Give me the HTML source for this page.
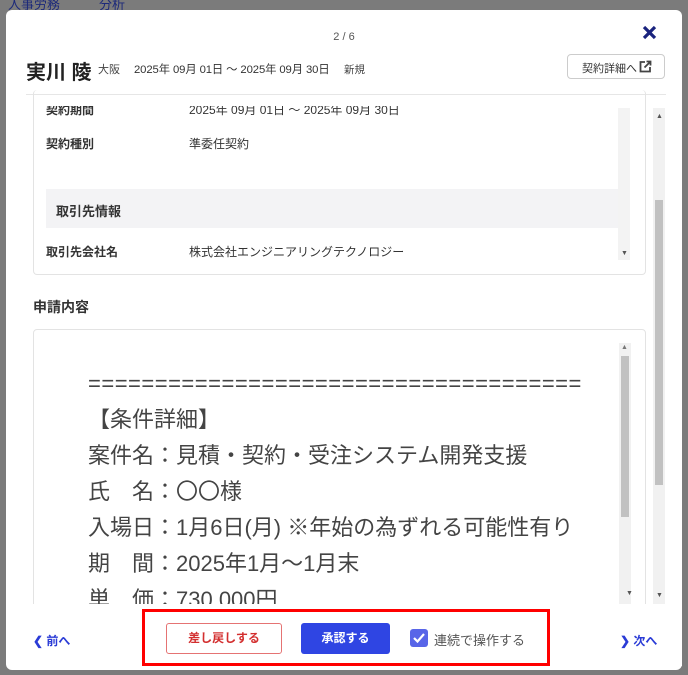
<!DOCTYPE html>
<html><head><meta charset="utf-8"><style>
*{box-sizing:border-box;margin:0;padding:0}
body{width:688px;height:675px;overflow:hidden;background:#7b7b7b;font-family:"Liberation Sans","Noto Sans CJK JP",sans-serif;color:#333;position:relative}
.abs{position:absolute}
.modal{left:6px;top:10px;width:676px;height:660px;background:#fff;border-radius:6px}
.t12{font-size:12px}
</style></head><body>
<div class="abs" style="left:8px;top:-6px;font-size:13px;color:#1d2a7a">人事労務　　　分析</div>
<div class="abs modal"></div>
<div class="abs" style="left:0;width:688px;top:31px;text-align:center;font-size:11px;color:#555">2 / 6</div>
<svg class="abs" style="left:642px;top:25px" width="15" height="15" viewBox="0 0 15 15"><path d="M2 2L13 13M13 2L2 13" stroke="#1a237e" stroke-width="3.2"/></svg>
<div class="abs" style="left:26px;top:56px;font-size:20px;font-weight:bold;color:#222">実川 陵</div>
<div class="abs" style="left:98px;top:61px;font-size:11px;color:#444">大阪</div>
<div class="abs" style="left:134px;top:61px;font-size:11.3px;color:#333;letter-spacing:-0.1px">2025年 09月 01日 ～ 2025年 09月 30日</div>
<div class="abs" style="left:344px;top:62px;font-size:10.5px;color:#444">新規</div>
<div class="abs" style="left:567px;top:54px;width:98px;height:25px;border:1px solid #ccc;border-radius:4px;font-size:11px;color:#333;padding:5px 0 0 14px">契約詳細へ
<svg style="position:absolute;left:71px;top:5px" width="13" height="13" viewBox="0 0 13 13"><path d="M6 2H1.5V11.5H11V7M7.5 1.5H11.5V5.5M11.5 1.5L5.5 7.5" stroke="#444" stroke-width="1.8" fill="none"/></svg></div>
<div class="abs" style="left:26px;top:94px;width:640px;height:1px;background:#e6e6e6"></div>
<!-- outer scrollbar -->
<div class="abs" style="left:653px;top:108px;width:12px;height:497px;background:#f1f1f1"></div>
<div class="abs" style="left:655px;top:200px;width:8px;height:285px;background:#c1c1c1"></div>
<div class="abs" style="left:656px;top:113px;font-size:7px;color:#555">▲</div>
<div class="abs" style="left:656px;top:592px;font-size:7px;color:#555">▼</div>
<!-- card1 -->
<div class="abs" style="left:33px;top:90px;width:613px;height:185px;border:1px solid #e3e3e3;border-radius:4px;border-top:none"></div>
<div class="abs" style="left:618px;top:108px;width:12px;height:152px;background:#f3f3f3"></div>
<div class="abs" style="left:621px;top:250px;font-size:7px;color:#555">▼</div>
<div class="abs t12" style="left:46px;top:101px;color:#333;font-weight:bold">契約期間</div>
<div class="abs t12" style="left:189px;top:101px">2025年 09月 01日 ～ 2025年 09月 30日</div>
<div class="abs" style="left:34px;top:96px;width:611px;height:10px;background:#fff"></div>
<div class="abs t12" style="left:46px;top:135px;font-weight:bold">契約種別</div>
<div class="abs t12" style="left:189px;top:135px">準委任契約</div>
<div class="abs" style="left:46px;top:189px;width:572px;height:39px;background:#f3f3f5"></div>
<div class="abs" style="left:56px;top:201px;font-size:13px;font-weight:bold">取引先情報</div>
<div class="abs t12" style="left:46px;top:243px;font-weight:bold">取引先会社名</div>
<div class="abs t12" style="left:189px;top:243px">株式会社エンジニアリングテクノロジー</div>
<div class="abs" style="left:33px;top:297px;font-size:14px;font-weight:bold">申請内容</div>
<!-- card2 -->
<div class="abs" style="left:33px;top:329px;width:613px;height:300px;border:1px solid #e3e3e3;border-radius:4px"></div>
<div class="abs" style="left:619px;top:343px;width:12px;height:262px;background:#f1f1f1"></div>
<div class="abs" style="left:621px;top:356px;width:8px;height:161px;background:#c1c1c1"></div>
<div class="abs" style="left:621px;top:344px;font-size:7px;color:#777">▲</div>
<div class="abs" style="left:626px;top:590px;font-size:7px;color:#555">▼</div>
<div class="abs" style="left:88px;top:366px;font-size:22px;line-height:36px;color:#444;white-space:nowrap">
<div style="letter-spacing:0.5px">=====================================</div>
<div>【条件詳細】</div>
<div>案件名：見積・契約・受注システム開発支援</div>
<div>氏　名：〇〇様</div>
<div>入場日：1月6日(月) ※年始の為ずれる可能性有り</div>
<div>期　間：2025年1月～1月末</div>
<div>単　価：730,000円</div>
</div>
<!-- footer -->
<div class="abs" style="left:26px;top:604px;width:656px;height:62px;background:#fff"></div>
<div class="abs" style="left:142px;top:609px;width:408px;height:57px;border:3px solid #f00"></div>
<div class="abs" style="left:166px;top:623px;width:116px;height:31px;border:1px solid #e57373;border-radius:3px;color:#d32f2f;font-size:12px;font-weight:bold;text-align:center;line-height:29px">差し戻しする</div>
<div class="abs" style="left:301px;top:623px;width:89px;height:31px;background:#2f45e3;border-radius:3px;color:#fff;font-size:12px;font-weight:bold;text-align:center;line-height:31px">承認する</div>
<div class="abs" style="left:410px;top:629px;width:18px;height:18px;background:#5865e8;border-radius:3px"><svg width="18" height="18" viewBox="0 0 18 18"><path d="M4 9L7.5 12.5L14 5" stroke="#fff" stroke-width="2.2" fill="none"/></svg></div>
<div class="abs" style="left:434px;top:630px;font-size:13px;color:#555">連続で操作する</div>
<div class="abs" style="left:33px;top:632px;font-size:12px;font-weight:bold;color:#2a3bd6">❮ 前へ</div>
<div class="abs" style="left:620px;top:632px;font-size:12px;font-weight:bold;color:#2a3bd6">❯ 次へ</div>
</body></html>
